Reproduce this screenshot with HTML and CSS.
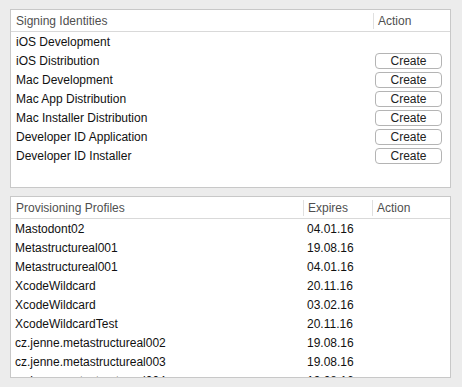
FILE: index.html
```html
<!DOCTYPE html>
<html lang="en">
<head>
    <meta charset="UTF-8">
    <title>Accounts</title>
    <link rel="stylesheet" href="styles.css">
</head>
<body>
    <div class="panel identities">
        <div class="head">
            <div class="hcell">Signing Identities</div>
            <div class="hcell sep">Action</div>
        </div>
        <div class="row"><span class="name">iOS Development</span><span></span></div>
        <div class="row"><span class="name">iOS Distribution</span><span><button class="create">Create</button></span></div>
        <div class="row"><span class="name">Mac Development</span><span><button class="create">Create</button></span></div>
        <div class="row"><span class="name">Mac App Distribution</span><span><button class="create">Create</button></span></div>
        <div class="row"><span class="name">Mac Installer Distribution</span><span><button class="create">Create</button></span></div>
        <div class="row"><span class="name">Developer ID Application</span><span><button class="create">Create</button></span></div>
        <div class="row"><span class="name">Developer ID Installer</span><span><button class="create">Create</button></span></div>
    </div>

    <div class="panel profiles">
        <div class="head">
            <div class="hcell">Provisioning Profiles</div>
            <div class="hcell sep">Expires</div>
            <div class="hcell sep">Action</div>
        </div>
        <div class="row"><span class="name">Mastodont02</span><span class="date">04.01.16</span><span></span></div>
        <div class="row"><span class="name">Metastructureal001</span><span class="date">19.08.16</span><span></span></div>
        <div class="row"><span class="name">Metastructureal001</span><span class="date">04.01.16</span><span></span></div>
        <div class="row"><span class="name">XcodeWildcard</span><span class="date">20.11.16</span><span></span></div>
        <div class="row"><span class="name">XcodeWildcard</span><span class="date">03.02.16</span><span></span></div>
        <div class="row"><span class="name">XcodeWildcardTest</span><span class="date">20.11.16</span><span></span></div>
        <div class="row"><span class="name">cz.jenne.metastructureal002</span><span class="date">19.08.16</span><span></span></div>
        <div class="row"><span class="name">cz.jenne.metastructureal003</span><span class="date">19.08.16</span><span></span></div>
        <div class="row"><span class="name">cz.jenne.metastructureal004</span><span class="date">19.08.16</span><span></span></div>
    </div>
</body>
</html>
```

FILE: styles.css
```css
body {
    margin: 0;
    padding: 9px 0 0 10px;
    background: #ececec;
    font-family: "Liberation Sans", Arial, sans-serif;
    font-size: 12px;
    color: #111;
}
.panel {
    width: 441px;
    box-sizing: border-box;
    border: 1px solid #c8c8c8;
    background: #fff;
    overflow: hidden;
}
.identities {
    height: 179px;
    margin-bottom: 8px;
}
.profiles {
    height: 182px;
}
.head {
    display: grid;
    height: 21px;
    align-items: center;
    border-bottom: 1px solid #d9d9d9;
    color: #4f4f4f;
}
.identities .head,
.identities .row {
    grid-template-columns: 362px 1fr;
}
.profiles .head,
.profiles .row {
    grid-template-columns: 292px 69px 1fr;
}
.hcell {
    height: 16px;
    line-height: 16px;
    padding-left: 5px;
}
.sep {
    border-left: 1px solid #e0e0e0;
    padding-left: 4px;
}
.row {
    display: grid;
    height: 19px;
    align-items: center;
}
.name {
    padding-left: 5px;
}
.profiles .name {
    padding-left: 4px;
}
.date {
    padding-left: 4px;
}
.create {
    display: block;
    width: 67px;
    height: 16px;
    margin-left: 2px;
    padding: 0;
    border: 1px solid #b4b4b4;
    border-radius: 4px;
    background: #fff;
    font-family: "Liberation Sans", Arial, sans-serif;
    font-size: 12px;
    line-height: 14px;
    color: #222;
}
```
